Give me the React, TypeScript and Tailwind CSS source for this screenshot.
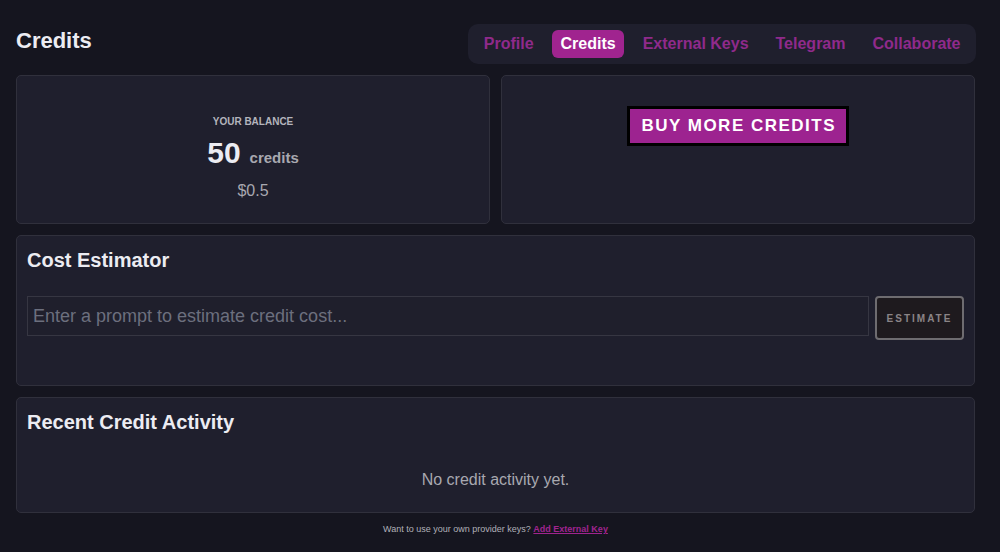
import React, { useState } from 'react';

const tabs = ['Profile', 'Credits', 'External Keys', 'Telegram', 'Collaborate'];

const Card: React.FC<{ className?: string; children: React.ReactNode }> = ({ className = '', children }) => (
  <div className={`bg-[#1f1f2d] border border-[#30303c] rounded-[5px] p-2.5 ${className}`}>{children}</div>
);

const App: React.FC = () => {
  const [activeTab, setActiveTab] = useState('Credits');
  const [prompt, setPrompt] = useState('');

  return (
    <div className="min-h-[552px] bg-[#15151f] font-['Liberation_Sans',Arial,sans-serif] text-[#e6e6ee]">
      <div className="pl-4 pr-[25px] pt-6 pb-4">
        <div className="flex justify-between items-start">
          <h1 className="text-[22px] leading-[26px] font-bold text-[#ececf2] mt-1">Credits</h1>
          <nav className="flex items-center gap-[10px] bg-[#1f1f2d] rounded-[10px] py-1.5 px-[7px] mr-[-1px]">
            {tabs.map(tab => (
              <button
                key={tab}
                onClick={() => setActiveTab(tab)}
                className={`px-[8.5px] h-7 rounded-md text-base font-bold leading-7 ${
                  activeTab === tab ? 'bg-[#a0248f] text-white' : 'text-[#8f2a8b]'
                }`}
              >
                {tab}
              </button>
            ))}
          </nav>
        </div>

        <div className="grid grid-cols-2 gap-[11px] mt-[11px]">
          <Card className="h-[149px]">
            <div className="flex flex-col items-center pt-[28px]">
              <span className="text-[10px] leading-[15px] font-bold text-[#b4b4bc] uppercase">Your Balance</span>
              <div className="flex items-baseline mt-1.5">
                <span className="text-[30px] leading-9 font-bold text-[#ececf2]">50</span>
                <span className="ml-[9px] text-[15px] font-bold text-[#a8a8b0]">credits</span>
              </div>
              <span className="mt-2 text-base leading-6 text-[#a8a8b0]">$0.5</span>
            </div>
          </Card>
          <Card className="h-[149px] flex justify-center items-start">
            <button className="mt-5 border-[3px] border-black bg-[#9d2390] text-white font-bold text-[17px] leading-[34px] tracking-[1.5px] pl-[11px] pr-[9.5px]">
              BUY MORE CREDITS
            </button>
          </Card>
        </div>

        <Card className="mt-[11px] h-[151px]">
          <h2 className="text-xl leading-7 font-bold text-[#ececf2]">Cost Estimator</h2>
          <div className="flex items-start gap-1.5 mt-[22px]">
            <input
              value={prompt}
              onChange={e => setPrompt(e.target.value)}
              placeholder="Enter a prompt to estimate credit cost..."
              className="flex-1 h-10 bg-[#1f1f2c] border border-[#363642] px-[5px] text-lg text-[#d0d0d8] placeholder:text-[#6c6f7e] outline-none"
            />
            <button className="w-[89px] h-11 border-2 border-[#6e6c70] rounded bg-[#1e1a1e] text-[10px] font-bold tracking-[2px] text-[#8a8486]">
              ESTIMATE
            </button>
          </div>
        </Card>

        <Card className="mt-[11px] h-[116px]">
          <h2 className="text-xl leading-7 font-bold text-[#ececf2]">Recent Credit Activity</h2>
          <p className="mt-8 text-center text-base leading-6 text-[#a8a8b0]">No credit activity yet.</p>
        </Card>

        <p className="mt-2.5 text-center text-[9px] leading-[13.5px] text-[#b0b0b8]">
          Want to use your own provider keys?{' '}
          <a href="#" className="font-bold text-[#a0248f] underline">Add External Key</a>
        </p>
      </div>
    </div>
  );
};

export default App;
